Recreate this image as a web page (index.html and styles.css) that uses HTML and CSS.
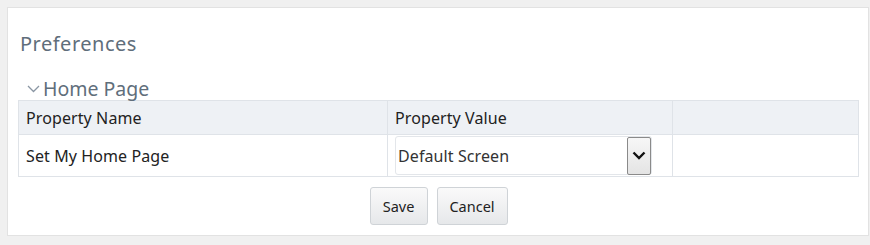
FILE: index.html
```html
<!DOCTYPE html>
<html lang="en">
  <head>
    <meta charset="UTF-8" />
    <title>Preferences</title>
    <link rel="stylesheet" href="styles.css">
  </head>
  <body>
    <div class="panel">
      <h1 class="panel_title">Preferences</h1>

      <div class="section">
        <div class="section_head">
          <svg class="chevron" width="13" height="8" viewBox="0 0 13 8">
            <path d="M1 1 L6.5 6.5 L12 1" fill="none" stroke="#8a96a3" stroke-width="1.3" />
          </svg>
          <span>Home Page</span>
        </div>

        <table class="prop-table">
          <thead>
            <tr>
              <th class="col-name">Property Name</th>
              <th class="col-value">Property Value</th>
              <th></th>
            </tr>
          </thead>
          <tbody>
            <tr>
              <td>Set My Home Page</td>
              <td class="cell-select">
                <div class="select">
                  <span class="select_text">Default Screen</span>
                  <span class="select_arrow">
                    <svg width="14" height="9" viewBox="0 0 14 9">
                      <path d="M1.5 1.5 L7 7 L12.5 1.5" fill="none" stroke="#111" stroke-width="2.4" />
                    </svg>
                  </span>
                </div>
              </td>
              <td></td>
            </tr>
          </tbody>
        </table>
      </div>

      <div class="actions">
        <button class="btn btn-save">Save</button>
        <button class="btn btn-cancel">Cancel</button>
      </div>
    </div>
  </body>
</html>
```

FILE: styles.css
```css
* {
  box-sizing: border-box;
}

body {
  margin: 0;
  padding: 7px 1px 0 7px;
  font-family: "Noto Sans", "Open Sans", sans-serif;
  background: #f0f0f0;
  color: #333;
}

.panel {
  height: 229px;
  background: #fff;
  border: 1px solid #e2e2e2;
  padding: 0 10px;
}

.panel_title {
  margin: 24px 0 0 2px;
  font-size: 20px;
  font-weight: normal;
  line-height: 24px;
  color: #5f6e7b;
  letter-spacing: 0.5px;
}

.section_head {
  display: flex;
  align-items: center;
  margin: 20px 0 0 9px;
  height: 24px;
  font-size: 19.5px;
  color: #5f6e7b;
}

.chevron {
  margin-right: 3px;
  margin-top: 2px;
}

.prop-table {
  width: 841px;
  margin-top: 0;
  table-layout: fixed;
  border-collapse: collapse;
  font-size: 16px;
  letter-spacing: 0.1px;
  color: #222;
}

.prop-table th,
.prop-table td {
  border: 1px solid #dfe3e8;
  text-align: left;
  font-weight: normal;
  padding: 0 7px;
}

.prop-table th {
  height: 34px;
  background: #eef1f5;
}

.prop-table td {
  height: 42px;
}

.col-name {
  width: 369px;
}

.col-value {
  width: 285px;
}

.prop-table td.cell-select {
  padding: 0 6px 0 7px;
}

.select {
  display: flex;
  align-items: center;
  width: 257px;
  height: 39px;
  border: 1px solid #e3e6ea;
  border-radius: 3px;
  background: #fff;
}

.select_text {
  flex: 1;
  padding-left: 2px;
  color: #333;
}

.select_arrow {
  display: flex;
  align-items: center;
  justify-content: center;
  width: 24px;
  height: 38px;
  border: 1px solid #8a8a8a;
  border-radius: 2px;
  background: linear-gradient(#f7f7f7, #e4e4e4);
}

.actions {
  display: flex;
  justify-content: center;
  gap: 9px;
  margin-top: 10px;
  padding-left: 1px;
}

.btn {
  height: 38px;
  padding: 0;
  border: 1px solid #cfd3d7;
  border-radius: 3px;
  background: linear-gradient(#fafafa, #e6e8ea);
  font-family: "Noto Sans", "Open Sans", sans-serif;
  font-size: 14.5px;
  color: #222;
  cursor: pointer;
}

.btn-save {
  width: 58px;
}

.btn-cancel {
  width: 71px;
}
```
